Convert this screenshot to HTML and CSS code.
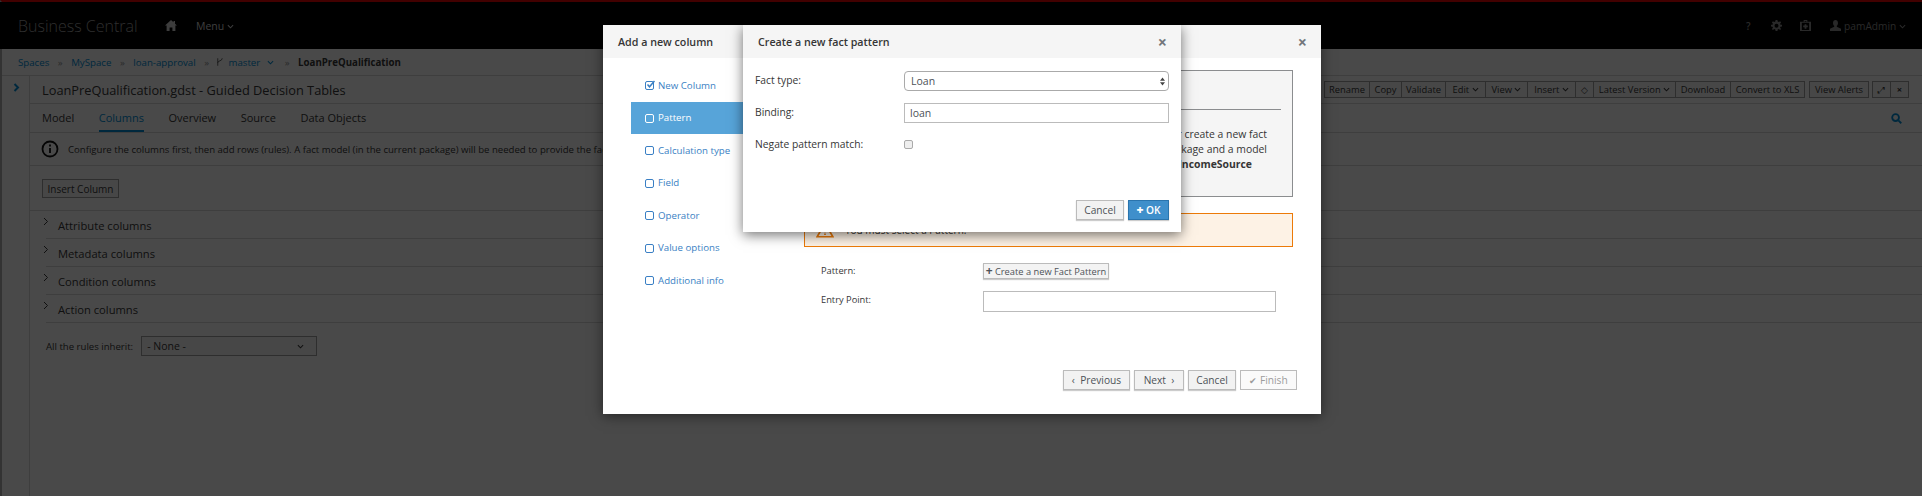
FILE: index.html
```html
<!DOCTYPE html>
<html lang="en">
<head>
    <meta charset="UTF-8">
    <meta name="viewport" content="width=device-width, initial-scale=1.0">
    <title>Business Central</title>
    <link rel="stylesheet" href="styles.css">
</head>
<body>
    <div class="page">
        <header class="topbar">
            <span class="brand">Business Central</span>
            <svg class="home" viewBox="0 0 12 11"><path d="M6 0 0 5.500h1.600V11h3V7.500h2.800V11h3V5.500H12L10 3.700V1H8.500v1.300z"/></svg>
            <span class="topmenu">Menu <svg class="chev" viewBox="0 0 8 5"><path d="M1 1l3 3 3-3"/></svg></span>
            <div class="utils">
                <span class="util-q">?</span>
                <svg class="util" viewBox="0 0 12 12"><path d="M5 0h2l.3 1.700 1.200.5L10 1.300 11 2.700 9.900 4l.4 1.100L12 5.300v1.800l-1.700.3-.4 1.100L11 9.700 9.900 11 8.500 9.900l-1.200.5L7 12H5l-.3-1.600-1.200-.5L2.100 11 1 9.700l1.100-1.300-.4-1L0 7.100V5.300l1.700-.2.4-1.100L1 2.700 2.100 1.300l1.400.9 1.200-.5zM6 4a2.200 2.200 0 100 4.400A2.200 2.200 0 006 4z"/></svg>
                <svg class="util util-kit" viewBox="0 0 12 12"><path fill-rule="evenodd" d="M4 0h4v2h4v10H0V2h4zm1 1v1h2V1zM2 3v8h8V3zm3 1.500h2V6h1.500v2H7v1.500H5V8H3.500V6H5z"/></svg>
                <span class="user"><svg class="util" viewBox="0 0 12 12"><path d="M6 0c1.700 0 2.700 1.300 2.700 3.200 0 1.400-.6 2.600-1.300 3.200v1L12 9.600V12H0V9.600l4.600-2.200v-1C3.900 5.800 3.300 4.600 3.300 3.200 3.300 1.300 4.300 0 6 0z"/></svg> pamAdmin <svg class="chev" viewBox="0 0 8 5"><path d="M1 1l3 3 3-3"/></svg></span>
            </div>
        </header>

        <nav class="crumbs">
            <a href="#">Spaces</a><span class="sep">»</span>
            <a href="#">MySpace</a><span class="sep">»</span>
            <a href="#">loan-approval</a><span class="sep">»</span>
            <svg class="branch" viewBox="0 0 8 12"><path d="M1 1v10M7 1c0 4-6 3-6 6"/></svg>
            <a href="#">master</a>
            <svg class="chev chev-link" viewBox="0 0 8 5"><path d="M1 1l3 3 3-3"/></svg><span class="sep">»</span>
            <strong>LoanPreQualification</strong>
        </nav>

        <div class="workspace">
            <aside class="rail">
                <svg class="rail-arrow" viewBox="0 0 6 9"><path d="M1 1l3.500 3.500L1 8"/></svg>
            </aside>
            <main class="editor">
                <div class="titlebar">
                    <h1>LoanPreQualification.gdst - Guided Decision Tables</h1>
                    <div class="toolbar">
                        <div class="btn-group">
                            <button class="w-rename">Rename</button><button class="w-copy">Copy</button><button class="w-validate">Validate</button>
                            <button class="w-edit">Edit <svg class="chev" viewBox="0 0 8 5"><path d="M1 1l3 3 3-3"/></svg></button>
                            <button class="w-view">View <svg class="chev" viewBox="0 0 8 5"><path d="M1 1l3 3 3-3"/></svg></button>
                            <button class="w-insert">Insert <svg class="chev" viewBox="0 0 8 5"><path d="M1 1l3 3 3-3"/></svg></button>
                            <button class="btn-icon">&#9671;</button>
                            <button class="w-latest">Latest Version <svg class="chev" viewBox="0 0 8 5"><path d="M1 1l3 3 3-3"/></svg></button>
                            <button class="w-download">Download</button><button class="w-convert">Convert to XLS</button>
                        </div>
                        <button class="btn-alone">View Alerts</button>
                        <div class="btn-group">
                            <button class="btn-icon">&#10530;</button><button class="btn-icon"><b>&times;</b></button>
                        </div>
                    </div>
                </div>
                <div class="tabs">
                    <a href="#">Model</a>
                    <a href="#" class="tab-active">Columns</a>
                    <a href="#">Overview</a>
                    <a href="#">Source</a>
                    <a href="#">Data Objects</a>
                    <svg class="search" viewBox="0 0 12 12"><circle cx="5" cy="5" r="3.700"/><path d="M8 8l3.200 3.200"/></svg>
                </div>
                <div class="notice">
                    <svg class="notice-icon" viewBox="0 0 18 18"><circle cx="9" cy="9" r="7.500"/><path d="M9 8v5M9 4.500v2"/></svg>
                    <span>Configure the columns first, then add rows (rules). A fact model (in the current package) will be needed to provide the facts.</span>
                </div>
                <div class="insert-row"><button class="btn-plain">Insert Column</button></div>
                <ul class="accordion">
                    <li><svg class="acc-arrow" viewBox="0 0 6 9"><path d="M1 1l3.500 3.500L1 8"/></svg>Attribute columns</li>
                    <li><svg class="acc-arrow" viewBox="0 0 6 9"><path d="M1 1l3.500 3.500L1 8"/></svg>Metadata columns</li>
                    <li><svg class="acc-arrow" viewBox="0 0 6 9"><path d="M1 1l3.500 3.500L1 8"/></svg>Condition columns</li>
                    <li><svg class="acc-arrow" viewBox="0 0 6 9"><path d="M1 1l3.500 3.500L1 8"/></svg>Action columns</li>
                </ul>
                <div class="inherit">
                    <span>All the rules inherit:</span>
                    <div class="fake-select">- None - <svg class="chev" viewBox="0 0 8 5"><path d="M1 1l3 3 3-3"/></svg></div>
                </div>
            </main>
        </div>
    </div>

    <div class="backdrop"></div>

    <!-- wizard -->
    <section class="modal wizard">
        <div class="modal-head">
            <h2>Add a new column</h2>
            <span class="close">&times;</span>
        </div>
        <div class="wizard-body">
            <ul class="steps">
                <li><svg class="box" viewBox="0 0 10 10"><rect x=".5" y="1.500" width="8" height="8" rx="1.500"/><path d="M2.500 4.500l2 2.300L9.500 1" stroke-width="1.500"/></svg>New Column</li>
                <li class="step-active"><svg class="box" viewBox="0 0 10 10"><rect x=".5" y="1.500" width="8" height="8" rx="1.500"/></svg>Pattern</li>
                <li><svg class="box" viewBox="0 0 10 10"><rect x=".5" y="1.500" width="8" height="8" rx="1.500"/></svg>Calculation type</li>
                <li><svg class="box" viewBox="0 0 10 10"><rect x=".5" y="1.500" width="8" height="8" rx="1.500"/></svg>Field</li>
                <li><svg class="box" viewBox="0 0 10 10"><rect x=".5" y="1.500" width="8" height="8" rx="1.500"/></svg>Operator</li>
                <li><svg class="box" viewBox="0 0 10 10"><rect x=".5" y="1.500" width="8" height="8" rx="1.500"/></svg>Value options</li>
                <li><svg class="box" viewBox="0 0 10 10"><rect x=".5" y="1.500" width="8" height="8" rx="1.500"/></svg>Additional info</li>
            </ul>
            <div class="step-content">
                <div class="help-box">
                    <h3>Pattern</h3>
                    <p>Select an existing fact pattern from the list or create a new fact<br>
                    pattern. Fact types come from the current package and a model<br>
                    must be present, for example <strong>IncomeSource</strong></p>
                </div>
                <div class="warn-box">
                    <svg class="warn-icon" viewBox="0 0 16 14"><path d="M8 1 1 13h14zM8 5v4M8 10v1.500"/></svg>
                    <span>You must select a Pattern.</span>
                </div>
                <div class="form-row form-row-first">
                    <label class="label-up-small">Pattern:</label>
                    <button class="btn-small"><b class="plus">+</b> Create a new Fact Pattern</button>
                </div>
                <div class="form-row">
                    <label class="label-up">Entry Point:</label>
                    <input class="entry" type="text">
                </div>
            </div>
        </div>
        <div class="wizard-foot">
            <button class="btn w-prev">&lsaquo;&nbsp; Previous</button>
            <button class="btn w-next">Next &nbsp;&rsaquo;</button>
            <button class="btn w-cancel">Cancel</button>
            <button class="btn btn-off w-finish"><span class="tick">&#10004;</span> Finish</button>
        </div>
    </section>

    <!-- popup on top of the wizard -->
    <section class="modal fact">
        <div class="modal-head">
            <h2>Create a new fact pattern</h2>
            <span class="close">&times;</span>
        </div>
        <div class="fact-body">
            <div class="fact-row">
                <label>Fact type:</label>
                <div class="fact-select">Loan
                    <svg class="updown" viewBox="0 0 7 11"><path d="M3.500 0 7 4.500H0zM3.500 11 0 6.500h7z"/></svg>
                </div>
            </div>
            <div class="fact-row">
                <label>Binding:</label>
                <input class="fact-input" type="text" value="loan">
            </div>
            <div class="fact-row fact-row-check">
                <label>Negate pattern match:</label>
                <input class="fact-check" type="checkbox">
            </div>
        </div>
        <div class="fact-foot">
            <button class="btn w-cancel">Cancel</button>
            <button class="btn btn-primary"><b class="plus">+</b> OK</button>
        </div>
    </section>
</body>
</html>
```

FILE: styles.css
```css
* {
    box-sizing: border-box;
}
html, body {
    margin: 0;
    padding: 0;
    height: 496px;
    overflow: hidden;
}
body {
    font-family: "Open Sans", Arial, sans-serif;
    font-size: 12px;
    color: #363636;
    background-color: #f5f5f5;
}
button {
    font-family: inherit;
    margin: 0;
}
ul {
    list-style-type: none;
    margin: 0;
    padding: 0;
}
a {
    text-decoration: none;
    color: #0088ce;
}
svg {
    flex: none;
}
.chev {
    width: 7px;
    height: 5px;
    fill: none;
    stroke: currentColor;
    stroke-width: 1.200;
    vertical-align: 1px;
}
.plus {
    font-size: 12px;
    line-height: 1;
}

/* page behind the dialogs */
.page {
    height: 496px;
    border-left: 2px solid #aaa;
    border-top: 2px solid #d00;
    display: flex;
    flex-direction: column;
}
.topbar {
    height: 47px;
    margin-left: -2px;
    background-color: #000;
    color: #ddd;
    display: flex;
    align-items: center;
    padding-left: 18px;
    padding-right: 16px;
    flex: none;
}
.brand {
    font-size: 16px;
    font-weight: 300;
    color: #999;
    width: 147px;
}
.home {
    width: 12px;
    height: 11px;
    fill: #ccc;
}
.topmenu {
    margin-left: 19px;
    font-size: 10.500px;
    color: #ccc;
}
.utils {
    margin-left: auto;
    display: flex;
    align-items: center;
    color: #8a8a8a;
}
.util-q {
    font-size: 10px;
    font-weight: 600;
    margin-right: 21px;
}
.util {
    width: 11px;
    height: 11px;
    fill: #8a8a8a;
    margin-right: 18px;
}
.util-kit {
    margin-right: 19px;
}
.user {
    font-size: 10.200px;
}
.user .util {
    margin-right: 0;
    vertical-align: -1px;
}
.crumbs {
    height: 27px;
    display: flex;
    align-items: center;
    padding-left: 16px;
    font-size: 9.700px;
    border-bottom: 1px solid #d1d1d1;
    flex: none;
}
.crumbs .sep {
    margin: 0 8.500px;
    color: #8b8d8f;
}
.crumbs strong {
    font-weight: 700;
}
.branch {
    width: 6px;
    height: 10px;
    fill: none;
    stroke: #363636;
    margin-right: 5px;
}
.chev-link {
    color: #0088ce;
    margin-left: 7px;
    margin-right: 2px;
}
.workspace {
    flex: 1;
    display: flex;
}
.rail {
    width: 28px;
    border-right: 1px solid #d1d1d1;
    flex: none;
    padding: 7px 0 0 11px;
}
.rail-arrow {
    width: 7px;
    height: 9px;
    fill: none;
    stroke: #0088ce;
    stroke-width: 2;
    display: block;
}
.editor {
    flex: 1;
    min-width: 0;
}
.titlebar {
    height: 28px;
    border-bottom: 1px solid #d1d1d1;
    display: flex;
    align-items: center;
    padding-left: 12px;
    padding-right: 13px;
}
.titlebar h1 {
    margin: 0;
    font-size: 12.800px;
    font-weight: 400;
}
.toolbar {
    margin-left: auto;
    display: flex;
    align-items: center;
}
.btn-group {
    display: flex;
}
.btn-group button, .btn-alone {
    height: 17px;
    padding: 0;
    font-size: 9.400px;
    color: #363636;
    background-color: #eee;
    border: 1px solid #999;
    margin-left: -1px;
    line-height: 13px;
    white-space: nowrap;
}
.btn-alone {
    width: 60px;
    margin-left: 4px;
    margin-right: 4px;
}
.btn-group .w-rename { width: 46px; }
.btn-group .w-copy { width: 33px; }
.btn-group .w-validate { width: 45px; }
.btn-group .w-edit { width: 41px; }
.btn-group .w-view { width: 43px; }
.btn-group .w-insert { width: 49px; }
.btn-group .w-latest { width: 83px; }
.btn-group .w-download { width: 56px; }
.btn-group .w-convert { width: 75px; }
.btn-group .btn-icon {
    width: 19px;
}
.tabs {
    height: 29px;
    border-bottom: 1px solid #d1d1d1;
    display: flex;
    align-items: stretch;
    padding-left: 12px;
    gap: 24.500px;
    font-size: 11px;
    position: relative;
}
.tabs a {
    color: #363636;
    line-height: 28px;
}
.tabs .tab-active {
    color: #0088ce;
    border-bottom: 2px solid #0088ce;
}
.search {
    width: 11px;
    height: 11px;
    fill: none;
    stroke: #0088ce;
    stroke-width: 2;
    margin-left: auto;
    margin-right: 20px;
    align-self: center;
}
.notice {
    height: 33px;
    border-bottom: 1px solid #d1d1d1;
    display: flex;
    align-items: center;
    padding-left: 11px;
    gap: 9px;
    font-size: 9.600px;
    white-space: nowrap;
}
.notice-icon {
    width: 18px;
    height: 18px;
    fill: none;
    stroke: #111;
    stroke-width: 1.800;
}
.insert-row {
    height: 45px;
    padding: 13px 0 0 12px;
    border-bottom: 1px solid #d1d1d1;
}
.btn-plain {
    height: 19px;
    width: 77px;
    padding: 0;
    font-size: 10px;
    color: #363636;
    background-color: #eee;
    border: 1px solid #999;
}
.accordion {
    padding-left: 16px;
}
.accordion li {
    height: 28px;
    border-bottom: 1px solid #d1d1d1;
    font-size: 11.200px;
    line-height: 26px;
    display: flex;
    align-items: center;
    position: relative;
    padding: 2px 0 0 12px;
}
.acc-arrow {
    position: absolute;
    left: -3px;
    top: 6px;
    width: 6px;
    height: 9px;
    fill: none;
    stroke: #363636;
}
.inherit {
    display: flex;
    align-items: center;
    gap: 8px;
    padding: 13px 0 0 16px;
    font-size: 9.600px;
}
.fake-select {
    width: 176px;
    height: 20px;
    border: 1px solid #999;
    background-color: #eee;
    display: flex;
    align-items: center;
    justify-content: space-between;
    padding: 0 12px 0 5px;
    font-size: 10.500px;
}
.backdrop {
    position: absolute;
    inset: 0;
    background-color: rgba(0, 0, 0, 0.7);
}

/* dialogs */
.modal {
    position: absolute;
    top: 25px;
    background-color: #fff;
    box-shadow: 0 2px 12px rgba(0, 0, 0, 0.5);
    display: flex;
    flex-direction: column;
}
.modal-head {
    height: 33px;
    flex: none;
    background-color: #f5f5f5;
    display: flex;
    align-items: center;
    justify-content: space-between;
    padding: 0 14px 0 15px;
}
.modal-head h2 {
    margin: 0;
    font-size: 10.700px;
    font-weight: 600;
    color: #363636;
}
.close {
    font-size: 16px;
    font-weight: 700;
    color: #72767b;
    line-height: 1;
}
.wizard {
    left: 603px;
    width: 718px;
    height: 389px;
}
.wizard-body {
    display: flex;
    padding-left: 28px;
    flex: 1;
}
.steps {
    width: 159px;
    padding-top: 11px;
    margin-right: 14px;
    flex: none;
}
.steps li {
    height: 32.500px;
    display: flex;
    align-items: center;
    padding-left: 14px;
    gap: 3px;
    font-size: 9.700px;
    color: #3a7fc4;
}
.box {
    width: 10px;
    height: 10px;
    fill: none;
    stroke: #3a7fc4;
}
.steps .step-active {
    background-color: #57a4d9;
    color: #fff;
}
.step-active .box {
    stroke: #fff;
}
.step-content {
    width: 489px;
    padding-top: 12px;
}
.help-box {
    height: 127px;
    border: 1px solid #8b8d8f;
    background-color: #f5f5f5;
    padding: 10px 11px 0 60px;
}
.help-box h3 {
    margin: 0;
    height: 29px;
    font-size: 14px;
    font-weight: 400;
    border-bottom: 1px solid #8b8d8f;
}
.help-box p {
    margin: 17px 0 0;
    font-size: 10.400px;
    line-height: 15px;
    text-align: right;
    padding-right: 14px;
}
.help-box strong {
    font-weight: 700;
    margin-right: 15px;
}
.warn-box {
    height: 34px;
    margin-top: 16px;
    border: 1px solid #ec7a08;
    background-color: #fdf2e5;
    display: flex;
    align-items: center;
    padding-left: 11px;
    gap: 11px;
    font-size: 10px;
}
.warn-icon {
    width: 18px;
    height: 16px;
    fill: none;
    stroke: #ec7a08;
    stroke-width: 1.500;
}
.form-row {
    display: flex;
    align-items: center;
    margin-top: 12px;
    padding-left: 17px;
}
.form-row-first {
    margin-top: 16px;
}
.form-row label {
    width: 162px;
    font-size: 9.300px;
    font-weight: 500;
    flex: none;
}
.form-row .label-up {
    padding-bottom: 5px;
}
.form-row .label-up-small {
    padding-bottom: 2px;
}
.form-row .entry {
    width: 293px;
    height: 21px;
    border: 1px solid #bbb;
    padding: 0;
}
.btn-small {
    width: 126px;
    height: 16px;
    padding: 0;
    font-size: 9.300px;
    color: #4d5258;
    background-color: #f3f3f3;
    border: 1px solid #bbb;
    box-shadow: 0 1px 1px rgba(0, 0, 0, 0.2);
    white-space: nowrap;
}
.wizard-foot {
    flex: none;
    display: flex;
    justify-content: flex-end;
    gap: 4px;
    padding: 0 24px 24px 0;
}
.btn {
    height: 20px;
    padding: 0;
    font-size: 10.200px;
    color: #4d5258;
    background-color: #f2f2f2;
    border: 1px solid #bbb;
    box-shadow: 0 1px 1px rgba(0, 0, 0, 0.2);
    white-space: nowrap;
}
.w-prev { width: 67px; }
.w-next { width: 50px; }
.w-cancel { width: 48px; }
.w-finish { width: 57px; }
.btn-off {
    color: #9c9c9c;
    background-color: #fafafa;
    box-shadow: none;
}
.tick {
    font-size: 9px;
}
.btn-primary {
    width: 41px;
    color: #fff;
    font-weight: 600;
    background-color: #3f8fcb;
    border-color: #2a74ad;
}
.fact {
    left: 743px;
    width: 438px;
    height: 207px;
    box-shadow: 0 3px 12px rgba(0, 0, 0, 0.55);
}
.fact-body {
    flex: 1;
    padding: 13px 12px 0;
}
.fact-row {
    display: flex;
    align-items: center;
    height: 20px;
    margin-bottom: 12px;
}
.fact-row label {
    width: 149px;
    flex: none;
    font-size: 10.300px;
    padding-bottom: 2px;
    color: #363636;
}
.fact-select {
    flex: 1;
    height: 20px;
    border: 1px solid #aaa;
    border-radius: 4px;
    font-size: 10.500px;
    display: flex;
    align-items: center;
    justify-content: space-between;
    padding: 0 3px 0 6px;
    color: #4d5258;
}
.updown {
    width: 5px;
    height: 9px;
    fill: #444;
}
.fact-input {
    flex: 1;
    min-width: 0;
    height: 20px;
    border: 1px solid #bbb;
    padding: 0 5px;
    font-family: inherit;
    font-size: 10.500px;
    color: #4d5258;
}
.fact-check {
    appearance: none;
    width: 9px;
    height: 9px;
    margin: 0 0 2px;
    border: 1px solid #aaa;
    border-radius: 2px;
    background-color: #eee;
}
.fact-foot {
    flex: none;
    display: flex;
    justify-content: flex-end;
    gap: 4px;
    padding: 0 12px 12px 0;
}
```
